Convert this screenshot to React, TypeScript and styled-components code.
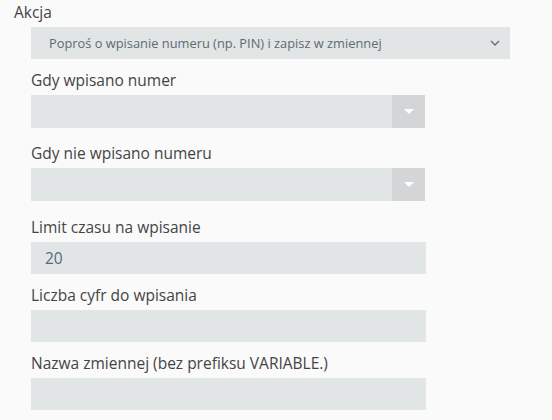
import React from 'react';
import styled, {createGlobalStyle} from 'styled-components';

const GlobalStyle = createGlobalStyle`
  html, body {
    margin: 0;
    background: #fafafa;
    font-family: "Open Sans", "Noto Sans", sans-serif;
  }
`;

const Form = styled.div`
  padding: 1px 0 0 14px;
`;

const TopLabel = styled.div`
  font-size: 15.5px;
  line-height: 22px;
  color: #444;
`;

const Fields = styled.div`
  padding: 4px 0 0 17px;
  display: flex;
  flex-direction: column;
`;

const Field = styled.div<{$gap: number}>`
  display: flex;
  flex-direction: column;
  margin-bottom: ${p => p.$gap}px;
`;

const Label = styled.label`
  font-size: 15.5px;
  line-height: 22px;
  color: #444;
  margin-bottom: 4px;
`;

const Select = styled.div`
  width: 479px;
  height: 32px;
  box-sizing: border-box;
  background: #e1e5e6;
  display: flex;
  align-items: center;
  justify-content: space-between;
  padding: 0 10px 0 18px;
  font-size: 12.85px;
  color: #5f6b70;
  margin-bottom: 10px;
`;

const Combo = styled.div`
  width: 394px;
  height: 33px;
  background: #e1e5e6;
  display: flex;
  justify-content: flex-end;
`;

const ComboArrow = styled.div`
  width: 33px;
  background: #d3d5d6;
  display: flex;
  align-items: center;
  justify-content: center;
`;

const Input = styled.div`
  width: 395px;
  height: 32px;
  box-sizing: border-box;
  background: #e1e5e6;
  display: flex;
  align-items: center;
  padding: 0 14px;
  font-size: 15.5px;
  color: #5a6878;
`;

const Chevron = () => (
  <svg width="10" height="6" viewBox="0 0 10 6">
    <path d="M1 1l4 4 4-4" fill="none" stroke="#5f6b70" strokeWidth="1.3" />
  </svg>
);

const Triangle = () => (
  <svg width="10" height="5" viewBox="0 0 10 5">
    <path d="M0 0h10L5 5z" fill="#fff" />
  </svg>
);

function App() {
  return (
    <>
      <GlobalStyle />
      <Form>
        <TopLabel>Akcja</TopLabel>
        <Fields>
          <Select>
            <span>Poproś o wpisanie numeru (np. PIN) i zapisz w zmiennej</span>
            <Chevron />
          </Select>
          <Field $gap={14}>
            <Label>Gdy wpisano numer</Label>
            <Combo><ComboArrow><Triangle /></ComboArrow></Combo>
          </Field>
          <Field $gap={15}>
            <Label>Gdy nie wpisano numeru</Label>
            <Combo><ComboArrow><Triangle /></ComboArrow></Combo>
          </Field>
          <Field $gap={10}>
            <Label>Limit czasu na wpisanie</Label>
            <Input>20</Input>
          </Field>
          <Field $gap={10}>
            <Label>Liczba cyfr do wpisania</Label>
            <Input />
          </Field>
          <Field $gap={10}>
            <Label>Nazwa zmiennej (bez prefiksu VARIABLE.)</Label>
            <Input />
          </Field>
        </Fields>
      </Form>
    </>
  );
}

export default App;
